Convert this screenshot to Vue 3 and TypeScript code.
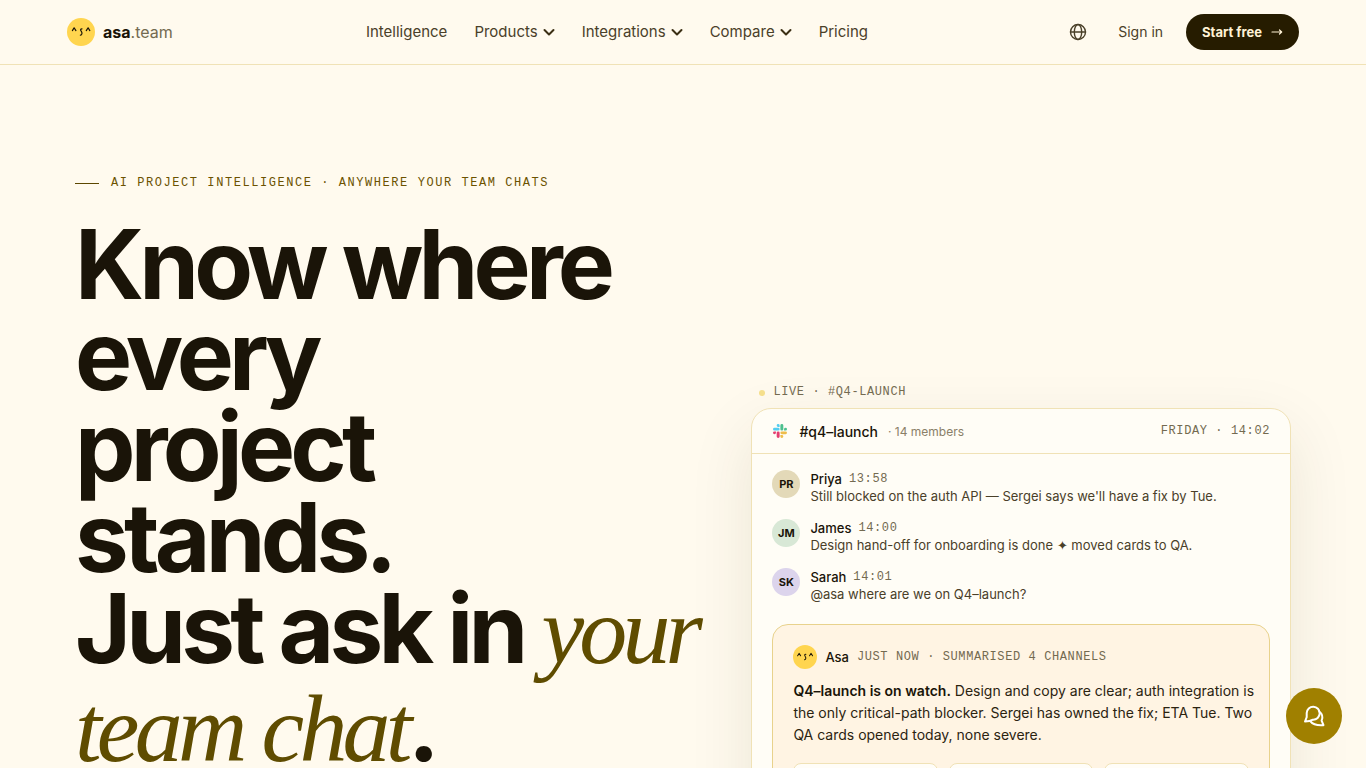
<script setup lang="ts">
interface NavItem {
  label: string
  menu: boolean
}

interface Message {
  initials: string
  name: string
  time: string
  text: string
  tone: string
}

const navItems: NavItem[] = [
  { label: 'Intelligence', menu: false },
  { label: 'Products', menu: true },
  { label: 'Integrations', menu: true },
  { label: 'Compare', menu: true },
  { label: 'Pricing', menu: false },
]

const messages: Message[] = [
  { initials: 'PR', name: 'Priya', time: '13:58', text: "Still blocked on the auth API — Sergei says we'll have a fix by Tue.", tone: 'sand' },
  { initials: 'JM', name: 'James', time: '14:00', text: 'Design hand-off for onboarding is done ✦ moved cards to QA.', tone: 'mint' },
  { initials: 'SK', name: 'Sarah', time: '14:01', text: '@asa where are we on Q4–launch?', tone: 'lilac' },
]
</script>

<template>
  <div class="page">
    <header class="topbar">
      <div class="topbar-inner">
        <a class="brand" href="#">
          <svg class="face" viewBox="0 0 28 28" aria-hidden="true">
            <circle cx="14" cy="14" r="14" fill="#ffd54f" />
            <path d="M5.4 12.600 7.100 9.800 8.900 12.600M19.300 12.600l1.800-2.800 1.700 2.800" />
            <path d="M15 10.800c-1.700 0-1.700 1.200-.8 2.400 1.200 1.500 1 4-.8 4" />
          </svg>
          <span class="brand-name"><b>asa</b>.team</span>
        </a>
        <nav class="links" aria-label="Main">
          <template v-for="item in navItems" :key="item.label">
            <button v-if="item.menu" class="link" type="button">
              {{ item.label }}
              <svg class="chevron" viewBox="0 0 12 12" aria-hidden="true"><path d="M1.500 4 6 8.500 10.500 4" /></svg>
            </button>
            <a v-else class="link" href="#">{{ item.label }}</a>
          </template>
        </nav>
        <div class="actions">
          <button class="globe" type="button" aria-label="Language">
            <svg viewBox="0 0 18 18" aria-hidden="true">
              <circle cx="9" cy="9" r="7.500" />
              <ellipse cx="9" cy="9" rx="3.700" ry="7.500" />
              <path d="M1.500 9h15" />
            </svg>
          </button>
          <a class="signin" href="#">Sign in</a>
          <a class="cta" href="#">Start free
            <svg viewBox="0 0 12 12" aria-hidden="true"><path d="M1 6h9.500M8.500 4 10.700 6 8.500 8" /></svg>
          </a>
        </div>
      </div>
    </header>

    <main class="hero">
      <section class="intro">
        <p class="eyebrow">AI PROJECT INTELLIGENCE · ANYWHERE YOUR TEAM CHATS</p>
        <h1>
          <span class="row">Know where</span>
          <span class="row">every</span>
          <span class="row">project</span>
          <span class="row">stands.</span>
          <span class="row">Just ask in <em>your</em></span>
          <span class="row last"><em>team chat</em>.</span>
        </h1>
      </section>

      <section class="demo" aria-label="Live channel">
        <p class="live mono">LIVE · #Q4-LAUNCH</p>
        <div class="card">
          <div class="card-head">
            <svg class="slack" viewBox="0 0 24 24" aria-hidden="true">
              <path fill="#e01e5a" d="M5.042 15.165a2.528 2.528 0 0 1-2.520 2.523A2.528 2.528 0 0 1 0 15.165a2.527 2.527 0 0 1 2.522-2.520h2.520v2.520zM6.313 15.165a2.527 2.527 0 0 1 2.521-2.520 2.527 2.527 0 0 1 2.521 2.520v6.313A2.528 2.528 0 0 1 8.834 24a2.528 2.528 0 0 1-2.521-2.522v-6.313z" />
              <path fill="#36c5f0" d="M8.834 5.042a2.528 2.528 0 0 1-2.521-2.520A2.528 2.528 0 0 1 8.834 0a2.528 2.528 0 0 1 2.521 2.522v2.520H8.834zM8.834 6.313a2.528 2.528 0 0 1 2.521 2.521 2.528 2.528 0 0 1-2.521 2.521H2.522A2.528 2.528 0 0 1 0 8.834a2.528 2.528 0 0 1 2.522-2.521h6.312z" />
              <path fill="#2eb67d" d="M18.956 8.834a2.528 2.528 0 0 1 2.522-2.521A2.528 2.528 0 0 1 24 8.834a2.528 2.528 0 0 1-2.522 2.521h-2.522V8.834zM17.688 8.834a2.528 2.528 0 0 1-2.523 2.521 2.527 2.527 0 0 1-2.520-2.521V2.522A2.527 2.527 0 0 1 15.165 0a2.528 2.528 0 0 1 2.523 2.522v6.312z" />
              <path fill="#ecb22e" d="M15.165 18.956a2.528 2.528 0 0 1 2.523 2.522A2.528 2.528 0 0 1 15.165 24a2.527 2.527 0 0 1-2.520-2.522v-2.522h2.520zM15.165 17.688a2.527 2.527 0 0 1-2.520-2.523 2.526 2.526 0 0 1 2.520-2.520h6.313A2.527 2.527 0 0 1 24 15.165a2.528 2.528 0 0 1-2.522 2.523h-6.313z" />
            </svg>
            <span class="channel">#q4–launch</span>
            <span class="members">· 14 members</span>
            <span class="mono date">FRIDAY · 14:02</span>
          </div>
          <div class="card-body">
            <ul class="messages">
              <li v-for="m in messages" :key="m.initials" class="message">
                <span class="avatar" :class="m.tone">{{ m.initials }}</span>
                <div>
                  <p class="who"><span class="name">{{ m.name }}</span><span class="mono">{{ m.time }}</span></p>
                  <p class="text">{{ m.text }}</p>
                </div>
              </li>
            </ul>
            <div class="answer">
              <div class="answer-head">
                <svg class="face small" viewBox="0 0 28 28" aria-hidden="true">
                  <circle cx="14" cy="14" r="14" fill="#ffd54f" />
                  <path d="M5.4 12.600 7.100 9.800 8.900 12.600M19.300 12.600l1.800-2.800 1.700 2.800" />
                  <path d="M15 10.800c-1.700 0-1.700 1.200-.8 2.400 1.200 1.500 1 4-.8 4" />
                </svg>
                <span class="name">Asa</span>
                <span class="mono">JUST NOW · SUMMARISED 4 CHANNELS</span>
              </div>
              <p class="summary"><b>Q4–launch is on watch.</b> Design and copy are clear; auth integration is the only critical-path blocker. Sergei has owned the fix; ETA Tue. Two QA cards opened today, none severe.</p>
              <div class="tiles">
                <div v-for="n in 3" :key="n" class="tile"></div>
              </div>
            </div>
          </div>
        </div>
      </section>
    </main>

    <button class="chat" type="button" aria-label="Open chat">
      <svg viewBox="0 0 24 24" aria-hidden="true">
        <path d="M3 17.500 4.700 13.200V9A6.500 6.500 0 1 1 11 15.700Q8 17.500 3 17.500Z" />
        <path d="M17.200 7.500C20.200 9.800 21 13.400 19.600 16.600L21.500 21.200C16 21.600 11.500 21.400 8.500 17.400" />
      </svg>
    </button>
  </div>
</template>

<style>
body {
  background: #fffaee;
}
</style>

<style scoped>
.page {
  height: 100vh;
  overflow: hidden;
  background: #fffaee;
  color: #1a1408;
  font-family: Inter, "Liberation Sans", sans-serif;
}

p,
h1,
ul {
  margin: 0;
  padding: 0;
}

button {
  border: 0;
  padding: 0;
  background: none;
  font: inherit;
  cursor: pointer;
}

a {
  color: inherit;
  text-decoration: none;
}

svg {
  flex: none;
  fill: none;
  stroke-linecap: round;
  stroke-linejoin: round;
}

.topbar {
  border-bottom: 1px solid #f0e2b6;
}

.topbar-inner {
  display: flex;
  align-items: center;
  justify-content: space-between;
  box-sizing: border-box;
  max-width: 1280px;
  height: 64px;
  margin: 0 auto;
  padding: 0 24px;
}

.brand {
  display: flex;
  align-items: center;
  gap: 8px;
}

.face {
  width: 28px;
  height: 28px;
  stroke: #1a1408;
  stroke-width: 1.2;
}

.face circle {
  stroke: none;
}

.face.small {
  width: 24px;
  height: 24px;
}

.brand-name {
  font-size: 16px;
  color: #736a50;
}

.brand-name b {
  color: #1a1408;
}

.links {
  display: flex;
  gap: 27px;
}

.link {
  display: flex;
  align-items: center;
  gap: 5px;
  font-size: 15px;
  line-height: 20px;
  color: #4a4029;
}

.chevron {
  width: 12px;
  height: 12px;
  stroke: #3b2f14;
  stroke-width: 2;
}

.actions {
  display: flex;
  align-items: center;
  gap: 23px;
}

.signin {
  font-size: 14px;
  line-height: 20px;
  color: #4a4029;
}

.globe {
  display: flex;
  padding: 8px;
}

.globe svg {
  width: 18px;
  height: 18px;
  stroke: #4a4029;
  stroke-width: 1.4;
}

.cta {
  display: flex;
  align-items: center;
  gap: 9px;
  height: 36px;
  padding: 0 16px;
  border-radius: 18px;
  background: #261c00;
  color: #fff3d6;
  font-size: 13px;
  font-weight: 700;
}

.cta svg {
  width: 12px;
  height: 12px;
  stroke: #fff3d6;
  stroke-width: 1.2;
}

.hero {
  display: grid;
  grid-template-columns: minmax(0, 1.05fr) minmax(0, 0.95fr);
  gap: 80px;
  box-sizing: border-box;
  max-width: 1280px;
  margin: 0 auto;
  padding: 108px 32px 0;
}

.eyebrow {
  display: flex;
  align-items: center;
  gap: 12px;
  font-family: "Liberation Mono", monospace;
  font-size: 12px;
  line-height: 21px;
  letter-spacing: 0.13em;
  white-space: nowrap;
  color: #6b5200;
}

.eyebrow::before {
  content: "";
  width: 24px;
  height: 1px;
  background: #5c4700;
}

h1 {
  margin-top: 25px;
  font-size: 96px;
  font-weight: 700;
  line-height: 91px;
  letter-spacing: -0.05em;
  white-space: nowrap;
}

.row {
  display: block;
}

.row.last {
  line-height: 104px;
}

h1 em {
  font-family: "Liberation Serif", serif;
  font-size: 96px;
  font-weight: 400;
  line-height: 1px;
  color: #5f4c00;
}

.demo {
  padding-top: 209px;
}

.mono {
  font-family: "Liberation Mono", monospace;
  font-size: 12px;
  letter-spacing: 0.05em;
  color: #736a50;
}

.live {
  display: flex;
  align-items: center;
  gap: 8px;
  padding-left: 8px;
  line-height: 21px;
}

.live::before {
  content: "";
  width: 6px;
  height: 6px;
  border-radius: 50%;
  background: #f5df8c;
}

.card {
  margin-top: 5px;
  border: 1px solid #f0e2b6;
  border-radius: 20px;
  background: #fffdf6;
  box-shadow: 0 24px 64px rgba(60, 45, 10, 0.1);
}

.card-head {
  display: flex;
  align-items: center;
  height: 44px;
  padding: 0 20px;
  border-bottom: 1px solid #f0e2b6;
}

.slack {
  width: 14px;
  height: 14px;
  margin: 0 12px 0 1px;
  opacity: 0.85;
}

.channel {
  font-size: 14px;
  font-weight: 500;
}

.members {
  margin-left: 10px;
  font-size: 12px;
  color: #8a8068;
}

.date {
  margin-left: auto;
}

.card-body {
  padding: 16px 20px 20px;
}

.messages {
  display: grid;
  gap: 14px;
  list-style: none;
}

.message {
  display: flex;
  gap: 10px;
}

.avatar {
  flex: none;
  width: 28px;
  height: 28px;
  border-radius: 50%;
  font-size: 11px;
  font-weight: 700;
  line-height: 28px;
  text-align: center;
}

.sand {
  background: #e3d9b8;
}

.mint {
  background: #d8e8d6;
}

.lilac {
  background: #dcd4ec;
}

.who {
  display: flex;
  align-items: center;
  gap: 7px;
  line-height: 18px;
}

.name {
  font-size: 13px;
  font-weight: 500;
}

.text {
  font-size: 13px;
  line-height: 17px;
  color: #4a4029;
}

.answer {
  margin-top: 21px;
  padding: 20px;
  border: 1px solid #e8d28c;
  border-radius: 16px;
  background: #fff4e3;
}

.answer-head {
  display: flex;
  align-items: center;
  gap: 8px;
}

.summary {
  margin: 11px -8px 0 0;
  font-size: 14px;
  line-height: 22px;
  color: #2b2310;
}

.summary b {
  font-weight: 600;
  color: #1a1408;
}

.tiles {
  display: grid;
  grid-template-columns: repeat(3, 1fr);
  gap: 11px;
  margin-top: 17px;
}

.tile {
  height: 60px;
  border: 1px solid #f0e2b6;
  border-radius: 8px;
  background: #fffdf8;
}

.chat {
  position: fixed;
  right: 24px;
  bottom: 24px;
  display: grid;
  place-items: center;
  width: 56px;
  height: 56px;
  border-radius: 50%;
  background: #a08000;
}

.chat svg {
  width: 24px;
  height: 24px;
  stroke: #fff;
  stroke-width: 2;
}
</style>
